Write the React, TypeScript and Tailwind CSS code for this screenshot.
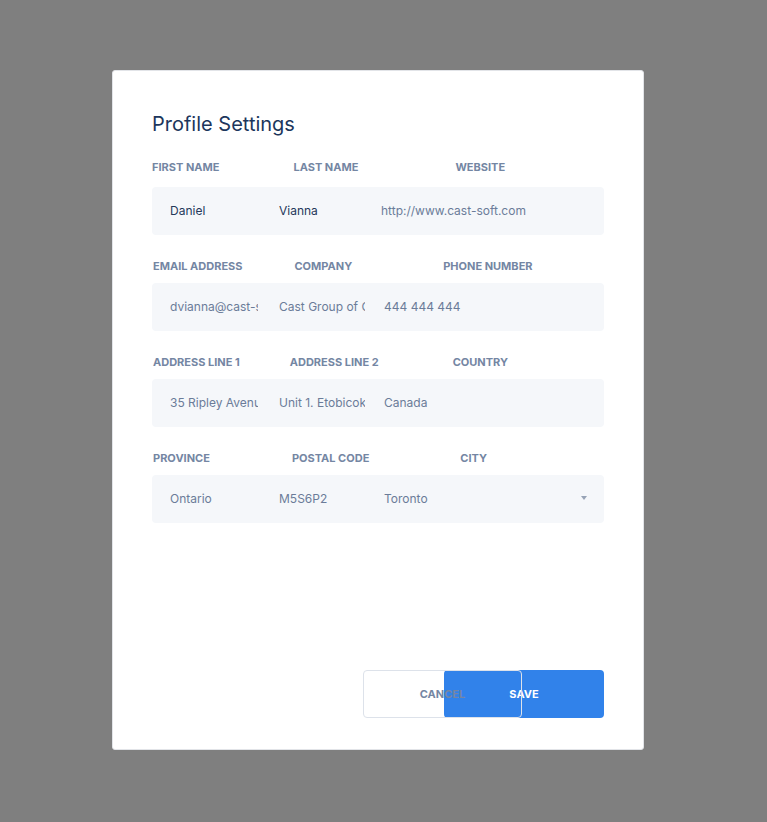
import React from "react";

type Field = { value: string; dark?: boolean };

const rows: { labels: { text: string; ml: string }[]; fields: Field[]; thirdPad: string; gap: string; select?: boolean }[] = [
  {
    labels: [
      { text: "First Name", ml: "ml-0" },
      { text: "Last Name", ml: "ml-[74px]" },
      { text: "Website", ml: "ml-[97px]" },
    ],
    fields: [{ value: "Daniel", dark: true }, { value: "Vianna", dark: true }, { value: "http://www.cast-soft.com" }],
    thirdPad: "pl-[15px]",
    gap: "mt-3",
  },
  {
    labels: [
      { text: "Email Address", ml: "ml-px" },
      { text: "Company", ml: "ml-[52px]" },
      { text: "Phone Number", ml: "ml-[91px]" },
    ],
    fields: [{ value: "dvianna@cast-soft.com" }, { value: "Cast Group of Companies" }, { value: "444 444 444" }],
    thirdPad: "pl-[18px]",
    gap: "mt-[9px]",
  },
  {
    labels: [
      { text: "Address Line 1", ml: "ml-px" },
      { text: "Address Line 2", ml: "ml-[50px]" },
      { text: "Country", ml: "ml-[74px]" },
    ],
    fields: [{ value: "35 Ripley Avenue" }, { value: "Unit 1. Etobicoke" }, { value: "Canada" }],
    thirdPad: "pl-[18px]",
    gap: "mt-[9px]",
  },
  {
    labels: [
      { text: "Province", ml: "ml-px" },
      { text: "Postal Code", ml: "ml-[82px]" },
      { text: "City", ml: "ml-[91px]" },
    ],
    fields: [{ value: "Ontario" }, { value: "M5S6P2" }, { value: "Toronto" }],
    thirdPad: "pl-[18px]",
    gap: "mt-[9px]",
    select: true,
  },
];

export default function App() {
  return (
    <div className="min-h-[822px] bg-[#7f7f7f] pt-[70px] pl-[112px] font-['Inter',sans-serif]">
      <div className="flex h-[680px] w-[532px] flex-col rounded-[3px] border border-[#e2e4e8] bg-white px-[39px] pt-[39px] pb-[31px]">
        <h2 className="text-[20px] leading-[28px] text-[#1c365c]">Profile Settings</h2>

        <div className="mt-[21px] flex flex-col gap-[23px]">
          {rows.map((row, i) => (
            <div key={i}>
              <div className="flex text-[11px] font-bold uppercase leading-4 text-[#7486a3]">
                {row.labels.map((l) => (
                  <span key={l.text} className={l.ml}>
                    {l.text}
                  </span>
                ))}
              </div>
              <div className={`${row.gap} flex h-12 items-center rounded bg-[#f5f7fa] text-[12px]`}>
                <input
                  readOnly
                  value={row.fields[0].value}
                  className={`w-[109px] bg-transparent pl-[18px] pr-[3px] outline-none ${row.fields[0].dark ? "text-[#25395a]" : "text-[#6b7c99]"}`}
                />
                <input
                  readOnly
                  value={row.fields[1].value}
                  className={`w-[105px] bg-transparent pl-[18px] pr-px outline-none ${row.fields[1].dark ? "text-[#25395a]" : "text-[#6b7c99]"}`}
                />
                <div className={`flex flex-1 items-center pr-[17px] ${row.thirdPad}`}>
                  <span className="flex-1 text-[#6b7c99]">{row.fields[2].value}</span>
                  {row.select && (
                    <svg width="6" height="4" viewBox="0 0 6 4" className="mt-[-2px]">
                      <path d="M0 0h6L3 4z" fill="#97a3b6" />
                    </svg>
                  )}
                </div>
              </div>
            </div>
          ))}
        </div>

        <div className="mt-auto flex justify-end">
          <button className="relative z-10 h-12 w-[159px] rounded border border-[#dde2ea] bg-transparent text-[11px] font-bold text-[#7486a3]">
            CANCEL
          </button>
          <button className="ml-[-78px] h-12 w-[160px] rounded bg-[#3182ea] text-[11px] font-bold text-white">
            SAVE
          </button>
        </div>
      </div>
    </div>
  );
}
